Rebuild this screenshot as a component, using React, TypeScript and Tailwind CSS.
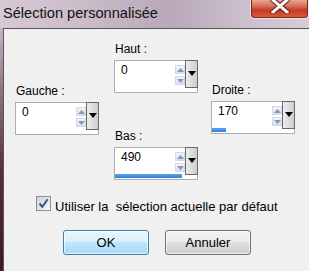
const SpinField = ({ label, value, bar }: { label: string; value: string; bar?: string }) => (
  <div className="w-[84px]">
    <div className="pl-[1px] text-[12px] leading-[15px] text-black">{label}</div>
    <div className="mt-[3px] flex h-[33px] w-[84px] flex-col border border-[#abadb3] bg-white">
      <div className="flex h-[26px]">
        <div className="flex-1 pl-[6px] pt-[2px] text-[12px] leading-[15px] text-black">{value}</div>
        <div className="flex w-[10px] flex-col gap-[2px] pt-[4px]">
          <div className="flex h-[9px] items-center justify-center border border-[#d4d9e6] bg-[linear-gradient(#f3f5fa,#d9dfec)]">
            <svg width="7" height="4" viewBox="0 0 7 4">
              <polygon points="0,4 3.5,0 7,4" fill="#8595bd" />
            </svg>
          </div>
          <div className="flex h-[9px] items-center justify-center border border-[#d4d9e6] bg-[linear-gradient(#f3f5fa,#d9dfec)]">
            <svg width="7" height="4" viewBox="0 0 7 4">
              <polygon points="0,0 7,0 3.5,4" fill="#8595bd" />
            </svg>
          </div>
        </div>
        <div className="-mr-[1px] -mt-[1px] flex h-[28px] w-[13px] justify-center border border-[#6a6a6a] bg-[linear-gradient(90deg,#ececec,#cdcdcd)] pt-[10px]">
          <svg width="8" height="5" viewBox="0 0 8 5">
            <polygon points="0,0 8,0 4,5" fill="#000" />
          </svg>
        </div>
      </div>
      <div className="h-[5px]">
        {bar && <div className={`h-[4px] bg-[linear-gradient(#5aa3ee,#2f80dc)] ${bar}`} />}
      </div>
    </div>
  </div>
)

export default function App() {
  return (
    <div
      className="flex h-[271px] w-[309px] flex-col overflow-hidden bg-[linear-gradient(180deg,#d2c6d2_0px,#c4b6c6_28px,#8d7485_90px,#5c2e33_170px,#3c1a1d_271px)]"
      style={{ fontFamily: '"Liberation Sans", Arial, sans-serif' }}
    >
      {/* barre de titre */}
      <div className="flex h-[28px] shrink-0 items-start bg-[linear-gradient(90deg,#d6cad5,#c9bac8_30%,#b8a8b9_55%,#cdbfcc_80%,#d8ccd6)]">
        <div className="pl-[3px] pt-[4px] text-[14.6px] leading-[18px] text-[#111]">Sélection personnalisée</div>
        <div className="ml-auto mr-[1px] flex h-[18px] w-[57px] justify-center rounded-b-[4px] border border-t-0 border-[#7a2a22] bg-[linear-gradient(#eba696,#d8705a_35%,#c43a24_60%,#d65a3c)] shadow-[0_0_0_1px_rgba(255,255,255,0.6)]">
          <svg width="20" height="13" viewBox="0 0 20 13">
            <path d="M3 0 L17 12 M17 0 L3 12" stroke="#5a1b14" strokeWidth="5" strokeLinecap="square" />
            <path d="M3 0 L17 12 M17 0 L3 12" stroke="#fff" strokeWidth="3" strokeLinecap="square" />
          </svg>
        </div>
      </div>

      {/* contenu */}
      <div className="ml-[3px] flex-1 border-l border-t border-[#565656] bg-[#f0f0f0]">
        <div className="flex pl-[11px] pt-[13px]">
          <div className="mt-[42px]">
            <SpinField label="Gauche :" value="0" />
          </div>
          <div className="ml-[15px]">
            <SpinField label="Haut :" value="0" />
            <div className="mt-[36px]">
              <SpinField label="Bas :" value="490" bar="w-[67px]" />
            </div>
          </div>
          <div className="ml-[13px] mt-[41px]">
            <SpinField label="Droite :" value="170" bar="w-[14px]" />
          </div>
        </div>

        <div className="mt-[16px] flex items-start pl-[32px]">
          <div className="flex h-[15px] w-[15px] items-center justify-center border border-[#8e8f8f] bg-[linear-gradient(135deg,#d0d4da,#f7f7f7)]">
            <svg width="11" height="11" viewBox="0 0 11 11">
              <path d="M1.5 5.5 L4.3 8.8 L9.6 1.2" fill="none" stroke="#3e5488" strokeWidth="2" />
            </svg>
          </div>
          <div className="ml-[4px] mt-[3px] whitespace-pre text-[13px] leading-[16px] text-black">
            Utiliser la  sélection actuelle par défaut
          </div>
        </div>

        <div className="mt-[15px] flex gap-[16px] pl-[59px]">
          <button className="flex h-[25px] w-[86px] items-center justify-center rounded-[3px] border border-[#3c7fb1] bg-[linear-gradient(#eaf6fd,#d9f0fc_45%,#bee6fd_50%,#a7d9f5)] text-[13px] text-black shadow-[inset_0_0_0_1px_rgba(255,255,255,0.7)]">
            OK
          </button>
          <button className="flex h-[25px] w-[86px] items-center justify-center rounded-[3px] border border-[#707070] bg-[linear-gradient(#f2f2f2,#ebebeb_45%,#dddddd_50%,#cfcfcf)] text-[13px] text-black shadow-[inset_0_0_0_1px_rgba(255,255,255,0.7)]">
            Annuler
          </button>
        </div>
      </div>
    </div>
  )
}
